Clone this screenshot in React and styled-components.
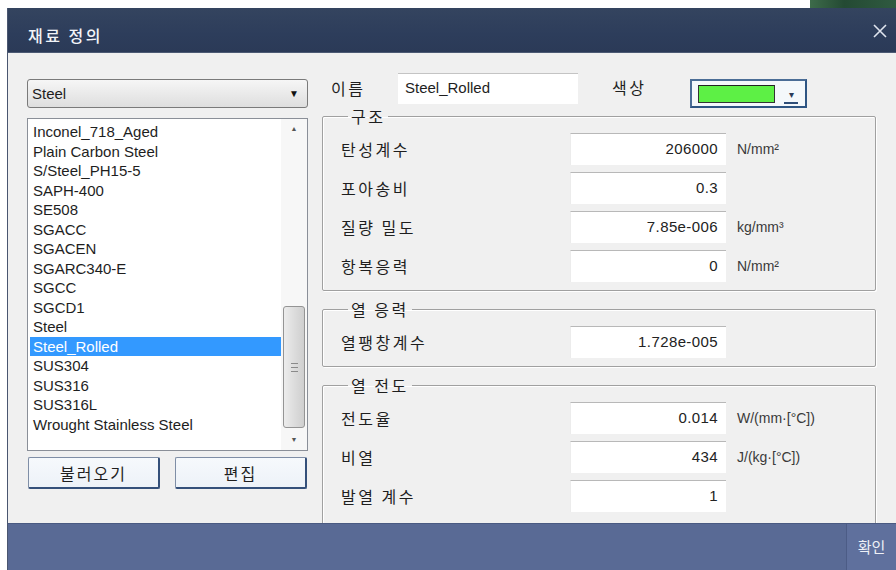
import React, { useState } from 'react';
import styled, { createGlobalStyle } from 'styled-components';

const GlobalStyle = createGlobalStyle`
	html, body {
		margin: 0;
		padding: 0;
		background: #ffffff;
	}
	body {
		font-family: 'Liberation Sans', 'Noto Sans CJK KR', sans-serif;
		color: #1e1e1e;
	}
`;

const materials = [
	'Inconel_718_Aged',
	'Plain Carbon Steel',
	'S/Steel_PH15-5',
	'SAPH-400',
	'SE508',
	'SGACC',
	'SGACEN',
	'SGARC340-E',
	'SGCC',
	'SGCD1',
	'Steel',
	'Steel_Rolled',
	'SUS304',
	'SUS316',
	'SUS316L',
	'Wrought Stainless Steel',
];

const groups = [
	{
		title: '구조',
		rows: [
			{ label: '탄성계수', value: '206000', unit: 'N/mm²' },
			{ label: '포아송비', value: '0.3', unit: '' },
			{ label: '질량 밀도', value: '7.85e-006', unit: 'kg/mm³' },
			{ label: '항복응력', value: '0', unit: 'N/mm²' },
		],
	},
	{
		title: '열 응력',
		rows: [{ label: '열팽창계수', value: '1.728e-005', unit: '' }],
	},
	{
		title: '열 전도',
		rows: [
			{ label: '전도율', value: '0.014', unit: 'W/(mm·[°C])' },
			{ label: '비열', value: '434', unit: 'J/(kg·[°C])' },
			{ label: '발열 계수', value: '1', unit: '' },
		],
		open: true,
	},
];

const MaterialDialog = () => {
	const [selected, setSelected] = useState('Steel_Rolled');

	return (
		<Page>
			<GlobalStyle />
			<TopStrip>
				<TopStripBlock />
			</TopStrip>
			<Window>
				<TitleBar>
					<Title>재료 정의</Title>
					<CloseButton>
						<svg width='14' height='14' viewBox='0 0 14 14'>
							<path d='M1 1 L13 13 M13 1 L1 13' stroke='#dfe4ee' strokeWidth='1.6' />
						</svg>
					</CloseButton>
				</TitleBar>
				<Body>
					<LeftPane>
						<Combo>
							<span>Steel</span>
							<ComboArrow>▼</ComboArrow>
						</Combo>
						<ListBox>
							<ListItems>
								{materials.map((m) => (
									<ListItem
										key={m}
										$active={m === selected}
										onClick={() => setSelected(m)}
									>
										{m}
									</ListItem>
								))}
							</ListItems>
							<ScrollBar>
								<ScrollArrow>▲</ScrollArrow>
								<ScrollTrack>
									<ScrollThumb>
										<Grip />
									</ScrollThumb>
								</ScrollTrack>
								<ScrollArrow>▼</ScrollArrow>
							</ScrollBar>
						</ListBox>
						<ButtonRow>
							<PushButton>불러오기</PushButton>
							<PushButton>편집</PushButton>
						</ButtonRow>
					</LeftPane>
					<RightPane>
						<HeaderRow>
							<HeaderLabel>이름</HeaderLabel>
							<NameInput>Steel_Rolled</NameInput>
							<ColorLabel>색상</ColorLabel>
							<ColorCombo>
								<Swatch />
								<ColorArrow>▾</ColorArrow>
							</ColorCombo>
						</HeaderRow>
						{groups.map((g) => (
							<Group key={g.title} $open={g.open}>
								<Legend>{g.title}</Legend>
								{g.rows.map((r) => (
									<FieldRow key={r.label}>
										<FieldLabel>{r.label}</FieldLabel>
										<ValueBox>{r.value}</ValueBox>
										<Unit>{r.unit}</Unit>
									</FieldRow>
								))}
							</Group>
						))}
					</RightPane>
				</Body>
				<Footer>
					<OkButton>확인</OkButton>
				</Footer>
			</Window>
		</Page>
	);
};

const Page = styled.div`
	width: 896px;
	height: 570px;
	overflow: hidden;
	display: flex;
	flex-direction: column;
`;

const TopStrip = styled.div`
	height: 8px;
	display: flex;
	justify-content: flex-end;
`;

const TopStripBlock = styled.div`
	width: 86px;
	background: linear-gradient(90deg, #3d6b4a, #244a33 40%, #2f5a40);
`;

const Window = styled.div`
	margin-left: 7px;
	flex: 1;
	display: flex;
	flex-direction: column;
	border-left: 1px solid #4a5670;
`;

const TitleBar = styled.div`
	height: 44px;
	flex: none;
	display: flex;
	align-items: center;
	justify-content: space-between;
	padding: 0 6px 0 20px;
	background: linear-gradient(180deg, #34445f 0%, #2d3d5b 60%, #2b3a57 100%);
	border-bottom: 1px solid #4c5a74;
`;

const Title = styled.div`
	font-family: 'Noto Sans CJK KR', sans-serif;
	font-size: 16px;
	font-weight: 500;
	letter-spacing: 2.5px;
	color: #f2f4f8;
	margin-top: 10px;
`;

const CloseButton = styled.div`
	width: 20px;
	height: 20px;
	display: flex;
	align-items: center;
	justify-content: center;
	margin-top: 1px;
`;

const Body = styled.div`
	height: 470px;
	flex: none;
	display: flex;
	background: #f0f0f0;
	overflow: hidden;
`;

const LeftPane = styled.div`
	width: 281px;
	padding: 26px 0 0 19px;
	display: flex;
	flex-direction: column;
`;

const Combo = styled.div`
	height: 27px;
	display: flex;
	align-items: center;
	justify-content: space-between;
	padding: 0 8px 0 4px;
	border: 1px solid #7a7a7a;
	border-radius: 3px;
	background: linear-gradient(180deg, #f6f6f6 0%, #eaeaea 50%, #dedede 100%);
	font-size: 15px;
`;

const ComboArrow = styled.span`
	font-size: 10px;
	color: #111;
`;

const ListBox = styled.div`
	margin-top: 10px;
	height: 331px;
	display: flex;
	border: 1px solid #8a8f98;
	background: #fff;
`;

const ListItems = styled.div`
	flex: 1;
	padding: 3px 0 0 2px;
`;

const ListItem = styled.div`
	height: 19.5px;
	line-height: 19.5px;
	padding-left: 3px;
	font-size: 15px;
	white-space: nowrap;
	cursor: default;
	color: ${({ $active }) => ($active ? '#fff' : '#1e1e1e')};
	background: ${({ $active }) => ($active ? '#3399ff' : 'transparent')};
`;

const ScrollBar = styled.div`
	width: 22px;
	display: flex;
	flex-direction: column;
	align-items: center;
	padding: 0 2px 0 2px;
	background: #f7f7f7;
`;

const ScrollArrow = styled.div`
	height: 20px;
	line-height: 20px;
	font-size: 7px;
	color: #555;
	text-align: center;
`;

const ScrollTrack = styled.div`
	flex: 1;
	width: 100%;
	display: flex;
	flex-direction: column;
	justify-content: flex-end;
	padding-bottom: 2px;
`;

const ScrollThumb = styled.div`
	height: 120px;
	display: flex;
	align-items: center;
	justify-content: center;
	border: 1px solid #949494;
	border-radius: 3px;
	background: linear-gradient(90deg, #ececec, #dadada 60%, #cfcfcf);
`;

const Grip = styled.div`
	width: 7px;
	height: 7px;
	border-top: 1px solid #8a8a8a;
	border-bottom: 1px solid #8a8a8a;
	position: relative;
	&::after {
		content: '';
		position: absolute;
		left: 0;
		right: 0;
		top: 3px;
		border-top: 1px solid #8a8a8a;
	}
`;

const ButtonRow = styled.div`
	margin-top: 6px;
	display: flex;
	gap: 15px;
	padding-left: 1px;
`;

const PushButton = styled.button`
	width: 132px;
	height: 32px;
	background: linear-gradient(180deg, #f6f9fc, #edf2f8);
	border: 1px solid #34507a;
	border-top-color: #7f8ea6;
	border-left-color: #7f8ea6;
	border-right-width: 2px;
	border-bottom-width: 2px;
	border-radius: 2px;
	font-family: 'Noto Sans CJK KR', sans-serif;
	font-size: 16px;
	letter-spacing: 2px;
	color: #1e1e1e;
	padding: 0;
`;

const RightPane = styled.div`
	margin-left: 14px;
	width: 554px;
	display: flex;
	flex-direction: column;
`;

const HeaderRow = styled.div`
	height: 32px;
	margin-top: 19px;
	display: flex;
	align-items: center;
`;

const HeaderLabel = styled.div`
	width: 67px;
	padding-left: 9px;
	font-family: 'Noto Sans CJK KR', sans-serif;
	font-size: 16px;
	letter-spacing: 2.5px;
`;

const NameInput = styled.div`
	width: 180px;
	height: 31px;
	box-sizing: border-box;
	padding: 2px 0 0 7px;
	background: #fff;
	border-top: 1px solid #c4c4c4;
	font-size: 15px;
	line-height: 24px;
`;

const ColorLabel = styled.div`
	margin-left: 34px;
	width: 78px;
	font-family: 'Noto Sans CJK KR', sans-serif;
	font-size: 16px;
	letter-spacing: 2.5px;
	margin-top: -2px;
`;

const ColorCombo = styled.div`
	width: 117px;
	height: 29px;
	margin-top: 11px;
	box-sizing: border-box;
	display: flex;
	align-items: center;
	gap: 9px;
	padding: 0 0 0 6px;
	border: 2px solid #2e5583;
	border-top-color: #4b6d96;
	border-left-color: #4b6d96;
	background: #f4f8fb;
`;

const Swatch = styled.div`
	width: 75px;
	height: 16px;
	background: #5df045;
	border: 1px solid #333;
	border-top-color: #222;
`;

const ColorArrow = styled.div`
	width: 14px;
	font-size: 10px;
	line-height: 8px;
	text-align: center;
	color: #2a3c58;
	border-bottom: 2px solid #2f4e78;
	padding-bottom: 3px;
	margin-top: 8px;
`;

const Group = styled.fieldset`
	margin: 3px 0 6px 0;
	padding: 8px 0 ${({ $open }) => ($open ? '40px' : '8px')} 18px;
	border: 1px solid #a0a0a0;
	box-shadow: inset 1px 1px 0 #fff, 1px 1px 0 #fff;
	border-radius: 2px;
	display: flex;
	flex-direction: column;
	gap: 7px;
	min-width: 0;
	&:first-of-type {
		margin-top: 3px;
	}
`;

const Legend = styled.legend`
	margin-left: 7px;
	padding: 0 3px;
	font-family: 'Noto Sans CJK KR', sans-serif;
	font-size: 16px;
	letter-spacing: 2.5px;
	line-height: 18px;
`;

const FieldRow = styled.div`
	display: grid;
	grid-template-columns: 229px 156px 1fr;
	align-items: center;
	height: 32px;
`;

const FieldLabel = styled.div`
	font-family: 'Noto Sans CJK KR', sans-serif;
	font-size: 16px;
	letter-spacing: 2.5px;
`;

const ValueBox = styled.div`
	height: 32px;
	box-sizing: border-box;
	padding-right: 8px;
	text-align: right;
	background: #fff;
	border-top: 1px solid #b8b8b8;
	border-left: 1px solid #ececec;
	font-size: 15px;
	letter-spacing: 0.4px;
	line-height: 29px;
	color: #222;
`;

const Unit = styled.div`
	padding-left: 11px;
	font-size: 14px;
	color: #3a3a3a;
	white-space: nowrap;
`;

const Footer = styled.div`
	flex: 1;
	display: flex;
	justify-content: flex-end;
	background: #596a95;
	border-top: 1px solid #4a5a82;
`;

const OkButton = styled.div`
	width: 49px;
	display: flex;
	align-items: center;
	justify-content: center;
	background: #5f709d;
	border-left: 1px solid #4c5c86;
	font-family: 'Noto Sans CJK KR', sans-serif;
	font-size: 15px;
	color: #eef0f6;
	padding-bottom: 1px;
`;

export default MaterialDialog;
